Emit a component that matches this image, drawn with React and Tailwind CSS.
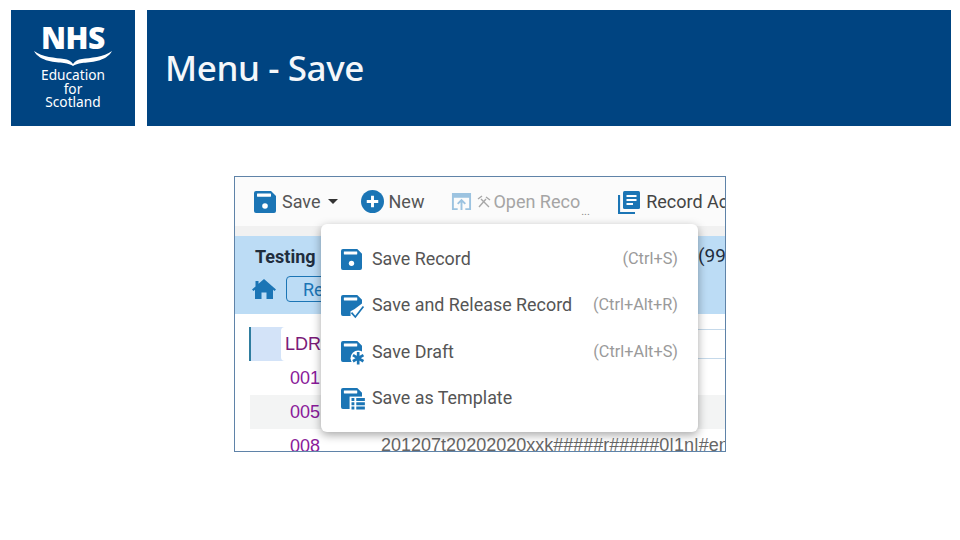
const BLUE = '#1b75b5';

function Floppy({ className, children, notch = true }) {
  return (
    <svg viewBox="0 0 22 22" className={className}>
      <path
        d="M2 0H17L22 5V20A2 2 0 0 1 20 22H2A2 2 0 0 1 0 20V2A2 2 0 0 1 2 0Z"
        fill={BLUE}
      />
      <rect x="3" y="2.500" width="14" height="3.200" rx="0.400" fill="#fff" />
      {notch && <circle cx="11" cy="15" r="2.800" fill="#fff" />}
      {children}
    </svg>
  );
}

function PlusCircle() {
  return (
    <svg viewBox="0 0 22 22" className="h-[23px] w-[23px] shrink-0">
      <circle cx="11" cy="11" r="11" fill={BLUE} />
      <path d="M11 5.500V16.500M5.500 11H16.500" stroke="#fff" strokeWidth="2.800" />
    </svg>
  );
}

function OpenIcon() {
  return (
    <svg viewBox="0 0 22 22" className="h-[21px] w-[21px] shrink-0">
      <path d="M1 2H21V20H15V18H19V7H3V18H7V20H1Z" fill="#9cc3e0" />
      <path d="M11 20V10M7 13.500L11 9.500L15 13.500" fill="none" stroke="#9cc3e0" strokeWidth="2" />
    </svg>
  );
}

function ToolsIcon() {
  return (
    <svg viewBox="0 0 14 14" className="h-[14px] w-[14px] shrink-0">
      <path d="M2 12L9 4M4 4L12 12M1 4L5 1M9 2L13 5" fill="none" stroke="#a8a8a8" strokeWidth="1.400" />
    </svg>
  );
}

function RecordIcon() {
  return (
    <svg viewBox="0 0 22 24" className="h-[24px] w-[22px] shrink-0">
      <path d="M1 5V23H17" fill="none" stroke={BLUE} strokeWidth="2.200" />
      <rect x="5" y="1" width="17" height="18" rx="1.500" fill={BLUE} />
      <path d="M8.500 6H18.500M8.500 10H18.500M8.500 14H15" stroke="#fff" strokeWidth="2" />
    </svg>
  );
}

function HomeIcon() {
  return (
    <svg viewBox="0 0 24 20" className="h-[20px] w-[24px] shrink-0">
      <path d="M12 0L24 10.500L22.500 12L21 10.800V20H14.500V13.500H9.500V20H3V10.800L1.500 12L0 10.500L3.500 7.500V2H6.500V4.800Z" fill={BLUE} />
    </svg>
  );
}

function Logo() {
  return (
    <div className="flex h-[116px] w-[124px] shrink-0 flex-col items-center bg-[#004481] pt-[15px] text-white">
      <div className="font-['Open_Sans',sans-serif] text-[30px] leading-[25px] font-extrabold tracking-[-0.500px]">NHS</div>
      <svg viewBox="0 0 78 16" className="h-[16px] w-[78px]">
        <path
          d="M0 1C8 7 22 8 30 9C34 9.500 37 11 39 14C41 11 44 9.500 48 9C56 8 70 7 78 1C72 12 56 12 48 13C44 13.500 41 14.500 39 16C37 14.500 34 13.500 30 13C22 12 6 12 0 1Z"
          fill="#fff"
        />
      </svg>
      <div className="mt-[2px] text-center font-['Noto_Sans',sans-serif] text-[13.700px] leading-[13.500px]">
        Education
        <br />
        for
        <br />
        Scotland
      </div>
    </div>
  );
}

const menuItems = [
  { label: 'Save Record', keys: '(Ctrl+S)', icon: 'plain' },
  { label: 'Save and Release Record', keys: '(Ctrl+Alt+R)', icon: 'check' },
  { label: 'Save Draft', keys: '(Ctrl+Alt+S)', icon: 'star' },
  { label: 'Save as Template', keys: '', icon: 'grid' },
];

function MenuIcon({ kind }) {
  return (
    <Floppy className="h-[21px] w-[21px] shrink-0 overflow-visible" notch={kind === 'plain'}>
      {kind === 'check' && (
        <>
          <path d="M10 24L10 17L14 15L22 9L25 11V24Z" fill="#fff" />
          <path d="M11 18.500L15 23L23.500 12" fill="none" stroke={BLUE} strokeWidth="1.800" />
        </>
      )}
      {kind === 'star' && (
        <>
          <circle cx="18" cy="18" r="8" fill="#fff" />
          <path d="M18 11.500V24.500M12.500 14.800L23.500 21.200M23.500 14.800L12.500 21.200" stroke={BLUE} strokeWidth="2.800" />
        </>
      )}
      {kind === 'grid' && (
        <>
          <rect x="9" y="9" width="17" height="16" fill="#fff" />
          <path d="M11 12H14M16 12H25M11 16.500H14M16 16.500H25M11 21H14M16 21H25" stroke={BLUE} strokeWidth="3" />
        </>
      )}
    </Floppy>
  );
}

function SaveMenu() {
  return (
    <div className="absolute top-[47px] left-[86px] w-[377px] rounded-[6px] bg-white pt-[12px] pr-[20px] pb-[10px] pl-[20px] font-['Roboto',sans-serif] shadow-[0_3px_10px_rgba(0,0,0,0.35)]">
      {menuItems.map((item) => (
        <div key={item.label} className="flex h-[46.400px] items-center">
          <MenuIcon kind={item.icon} />
          <span className="ml-[10px] text-[17.900px] text-[#555]">{item.label}</span>
          <span className="ml-auto text-[16.300px] text-[#9a9a9a]">{item.keys}</span>
        </div>
      ))}
    </div>
  );
}

function Toolbar() {
  return (
    <div className="flex h-[49px] items-center bg-[#fbfbfb] pl-[19px] text-[18px] whitespace-nowrap text-[#555]">
      <Floppy className="h-[22px] w-[22px] shrink-0" />
      <span className="ml-[6px]">Save</span>
      <span className="ml-[7px] h-0 w-0 border-x-[5px] border-t-[5px] border-x-transparent border-t-[#333]" />
      <span className="ml-[23px]">
        <PlusCircle />
      </span>
      <span className="ml-[5px]">New</span>
      <span className="ml-[27px]">
        <OpenIcon />
      </span>
      <span className="ml-[5px]">
        <ToolsIcon />
      </span>
      <span className="ml-[2px] text-[#a5a5a5]">Open Reco</span>
      <span className="mt-[20px] ml-[1px] w-[37px] shrink-0 text-[11px] leading-none text-[#888]">...</span>
      <RecordIcon />
      <span className="ml-[6px] text-[#444]">Record Actions</span>
    </div>
  );
}

function RecordPanel() {
  return (
    <div className="h-[78px] bg-[#bcdcf5] pt-[8px] pl-[20px]">
      <div className="flex h-[24px] items-center text-[18px] whitespace-nowrap text-[#1f2d3d]">
        <span className="w-[443px] shrink-0 font-bold">Testing</span>
        <span className="text-[19px]">(99</span>
      </div>
      <div className="mt-[8px] flex items-center">
        <span className="-ml-[3px]">
          <HomeIcon />
        </span>
        <span className="ml-[10px] flex h-[26px] w-[80px] items-center rounded-[4px] border border-[#1b75b5] pl-[16px] text-[18px] text-[#1b75b5]">
          Re
        </span>
      </div>
    </div>
  );
}

function MarcRows() {
  return (
    <div className="pt-[13px] pl-[14px] font-['Liberation_Sans',sans-serif] text-[18px] whitespace-nowrap">
      <div className="flex h-[34px] border-l-2 border-[#2f7d9f] bg-[#d3e3f8] pl-[30px] text-[#7a1a78]">
        <div className="flex flex-1 items-center rounded-l-[4px] bg-white pl-[4px]">
          LDR
          <div className="ml-auto h-[30px] w-[28px] border-y border-[#c5d9ea]" />
        </div>
      </div>
      <div className="ml-px flex h-[34px] items-center pl-[40px] text-[#8a1a9a]">001</div>
      <div className="ml-px flex h-[34px] items-center bg-[#f3f4f4] pl-[40px] text-[#8a1a9a]">005</div>
      <div className="ml-px flex h-[34px] items-center pl-[40px] text-[#8a1a9a]">
        008
        <span className="-mt-[2px] ml-[61px] text-[#666]">201207t20202020xxk#####r#####0|1n|#eng|d</span>
      </div>
    </div>
  );
}

export default function App() {
  return (
    <div className="h-[540px] w-[960px] overflow-hidden bg-white pt-[10px] pl-[11px]">
      <header className="flex gap-[12px]">
        <Logo />
        <div className="flex h-[116px] w-[804px] items-center bg-[#004481] pl-[18px]">
          <h1 className="font-['Noto_Sans',sans-serif] text-[35px] font-medium tracking-[-0.400px] text-[#f4f7fa]">Menu - Save</h1>
        </div>
      </header>
      <div className="relative mt-[50px] ml-[223px] h-[276px] w-[492px] overflow-hidden border border-[#5f83a8] bg-white font-['Roboto',sans-serif]">
        <Toolbar />
        <div className="h-[10px] bg-[#f1f1f1]" />
        <RecordPanel />
        <MarcRows />
        <SaveMenu />
      </div>
    </div>
  );
}
